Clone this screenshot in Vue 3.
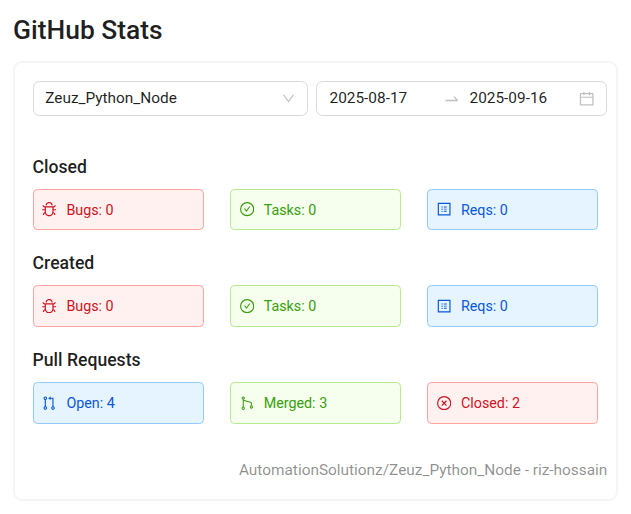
<script setup>
const groups = [
  { title: 'Closed', tags: [
    { icon: 'bug', text: 'Bugs: 0', color: 'red' },
    { icon: 'check', text: 'Tasks: 0', color: 'green' },
    { icon: 'profile', text: 'Reqs: 0', color: 'blue' },
  ] },
  { title: 'Created', tags: [
    { icon: 'bug', text: 'Bugs: 0', color: 'red' },
    { icon: 'check', text: 'Tasks: 0', color: 'green' },
    { icon: 'profile', text: 'Reqs: 0', color: 'blue' },
  ] },
  { title: 'Pull Requests', tags: [
    { icon: 'pull', text: 'Open: 4', color: 'blue' },
    { icon: 'merge', text: 'Merged: 3', color: 'green' },
    { icon: 'close', text: 'Closed: 2', color: 'red' },
  ] },
]
</script>

<template>
  <main class="page">
    <h1>GitHub Stats</h1>
    <section class="card">
      <div class="filters">
        <div class="field select">
          <span>Zeuz_Python_Node</span>
          <svg class="down" viewBox="64 64 896 896"><path d="M884 256h-75c-5.1 0-9.9 2.5-12.9 6.6L512 654.2 227.9 262.6c-3-4.1-7.8-6.6-12.9-6.6h-75c-6.5 0-10.3 7.4-6.5 12.7l352.6 486.1c12.8 17.6 39 17.6 51.7 0l352.6-486.1c3.9-5.3.1-12.7-6.4-12.7z" /></svg>
        </div>
        <div class="field range">
          <span class="date">2025-08-17</span>
          <svg class="arrow" viewBox="0 0 1024 1024"><path d="M873.1 596.2l-164-208A32 32 0 00684 376h-64.8c-6.7 0-10.4 7.7-6.3 13l144.3 183H152c-4.4 0-8 3.6-8 8v60c0 4.4 3.6 8 8 8h695.9c26.8 0 41.7-30.8 25.2-51.8z" /></svg>
          <span class="date">2025-09-16</span>
          <svg class="calendar" viewBox="64 64 896 896"><path d="M880 184H712v-64c0-4.4-3.6-8-8-8h-56c-4.4 0-8 3.6-8 8v64H384v-64c0-4.4-3.6-8-8-8h-56c-4.4 0-8 3.6-8 8v64H144c-17.7 0-32 14.3-32 32v664c0 17.7 14.3 32 32 32h736c17.7 0 32-14.3 32-32V216c0-17.7-14.3-32-32-32zm-40 656H184V460h656v380zM184 392V256h128v48c0 4.4 3.6 8 8 8h56c4.4 0 8-3.6 8-8v-48h256v48c0 4.4 3.6 8 8 8h56c4.4 0 8-3.6 8-8v-48h128v136H184z" /></svg>
        </div>
      </div>

      <section v-for="group in groups" :key="group.title" class="group">
        <h2>{{ group.title }}</h2>
        <div class="tags">
          <div v-for="tag in group.tags" :key="tag.text" class="tag" :class="tag.color">
            <svg class="icon" viewBox="64 64 896 896">
              <template v-if="tag.icon === 'bug'">
                <path d="M304 280h56c4.4 0 8-3.6 8-8 0-28.3 5.9-53.2 17.1-73.5 10.6-19.4 26-34.8 45.4-45.4C450.9 142 475.7 136 504 136h16c28.3 0 53.2 5.9 73.5 17.1 19.4 10.6 34.8 26 45.4 45.4C650 218.9 656 243.7 656 272c0 4.4 3.6 8 8 8h56c4.4 0 8-3.6 8-8 0-40-8.8-76.7-25.9-108.1a184.31 184.31 0 00-74-74C596.7 72.8 560 64 520 64h-16c-40 0-76.7 8.8-108.1 25.9a184.31 184.31 0 00-74 74C304.8 195.3 296 232 296 272c0 4.4 3.6 8 8 8z" />
                <path d="M940 512H792V412c76.8 0 139-62.2 139-139 0-4.4-3.6-8-8-8h-60c-4.4 0-8 3.6-8 8a63 63 0 01-63 63H232a63 63 0 01-63-63c0-4.4-3.6-8-8-8h-60c-4.4 0-8 3.6-8 8 0 76.8 62.2 139 139 139v100H84c-4.4 0-8 3.6-8 8v56c0 4.4 3.6 8 8 8h148v96c0 6.5.2 13 .7 19.3C164.1 728.6 116 796.7 116 876c0 4.4 3.6 8 8 8h56c4.4 0 8-3.6 8-8 0-44.2 23.9-82.9 59.6-103.7a273 273 0 0022.7 49c24.3 41.5 59 76.2 100.5 100.5S460.5 960 512 960s99.8-13.9 141.3-38.2a281.38 281.38 0 00123.2-149.5A120 120 0 01836 876c0 4.4 3.6 8 8 8h56c4.4 0 8-3.6 8-8 0-79.3-48.1-147.4-116.7-176.7.4-6.4.7-12.8.7-19.3v-96h148c4.4 0 8-3.6 8-8v-56c0-4.4-3.6-8-8-8zM716 680c0 36.8-9.7 72-27.8 102.9-17.7 30.3-43 55.6-73.3 73.3C584 874.3 548.8 884 512 884s-72-9.7-102.9-27.8c-30.3-17.7-55.6-43-73.3-73.3A202.75 202.75 0 01308 680V412h408v268z" />
              </template>
              <template v-else-if="tag.icon === 'check'">
                <path d="M699 353h-46.9c-10.2 0-19.9 4.9-25.9 13.3L469 584.3l-71.2-98.8c-6-8.3-15.6-13.3-25.9-13.3H325c-6.5 0-10.3 7.4-6.5 12.7l124.6 172.8a31.8 31.8 0 0051.7 0l210.6-292c3.9-5.3.1-12.7-6.4-12.7z" />
                <circle class="line" cx="512" cy="512" r="410" />
              </template>
              <template v-else-if="tag.icon === 'profile'">
                <path class="line" d="M148 148h728v728H148z" />
                <path d="M492 348h184v56H492zM492 484h184v56H492zM492 620h184v56H492z" />
                <circle cx="380" cy="376" r="40" /><circle cx="380" cy="512" r="40" /><circle cx="380" cy="648" r="40" />
              </template>
              <path v-else-if="tag.icon === 'pull'" d="M788 705.9V192c0-8.8-7.2-16-16-16H602v-68.8c0-6-7-9.4-11.7-5.7L462.7 202.3a7.14 7.14 0 000 11.3l127.6 100.8c4.7 3.7 11.7.4 11.7-5.7V240h114v465.9c-44.2 15-76 56.9-76 106.1 0 61.8 50.2 112 112 112s112-50.2 112-112c.1-49.2-31.7-91-75.9-106.1zM752 860a48.01 48.01 0 010-96 48.01 48.01 0 010 96zM384 212c0-61.8-50.2-112-112-112s-112 50.2-112 112c0 49.2 31.8 91 76 106.1V706c-44.2 15-76 56.9-76 106.1 0 61.8 50.2 112 112 112s112-50.2 112-112c0-49.2-31.8-91-76-106.1V318.1c44.2-15.1 76-56.9 76-106.1zm-160 0a48.01 48.01 0 0196 0 48.01 48.01 0 01-96 0zm96 600a48.01 48.01 0 01-96 0 48.01 48.01 0 0196 0z" />
              <template v-else-if="tag.icon === 'merge'">
                <g class="line branch">
                  <circle cx="268" cy="192" r="72" /><circle cx="268" cy="832" r="72" /><circle cx="776" cy="752" r="72" />
                  <path d="M268 264v496M268 330l456 122q52 16 52 66v162" />
                </g>
              </template>
              <template v-else>
                <circle class="line" cx="512" cy="512" r="410" />
                <path class="line" d="M366 360l292 304M658 360L366 664" />
              </template>
            </svg>
            <span>{{ tag.text }}</span>
          </div>
        </div>
      </section>
      <footer>AutomationSolutionz/Zeuz_Python_Node - riz-hossain</footer>
    </section>
  </main>
</template>

<style>
body { margin: 0; background: #fff; }
</style>

<style scoped>
.page { box-sizing: border-box; width: 631px; height: 514px; padding: 14px 13px 0; font-family: Roboto, sans-serif; font-size: 15.4px; color: rgba(0, 0, 0, .88); }
h1 { margin: 0 0 15px; font-size: 26.4px; line-height: 32px; font-weight: 500; }
.card { box-sizing: border-box; width: 605px; height: 440px; border: 2px solid #f5f5f5; border-radius: 9px; padding: 18px 8.7px 0 17.6px; }
.filters { display: flex; gap: 8px; margin-bottom: 39.8px; }
.field { box-sizing: border-box; height: 35px; border: 1px solid #d9d9d9; border-radius: 6.6px; display: flex; align-items: center; line-height: 33px; }
.field svg { fill: rgba(0, 0, 0, .25); flex: none; }
.select { width: 275.4px; padding: 0 12px 0 11.6px; justify-content: space-between; }
.range { width: 291px; padding: 0 12px 0 12.5px; }
.date { width: 114.1px; }
.arrow { width: 17.6px; height: 17.6px; margin-right: 8.6px; }
.arrow + .date { width: 109.4px; }
.down { width: 13px; height: 13px; }
.calendar { width: 15.4px; height: 15.4px; }
.group { height: 96.6px; }
h2 { margin: 0 0 10.9px; font-size: 17.6px; line-height: 22px; font-weight: 500; }
.tags { display: grid; grid-template-columns: repeat(3, 171px); gap: 26.3px; }
.tag { box-sizing: border-box; height: 41.7px; padding-left: 8.8px; display: flex; align-items: center; gap: 9.7px; border: 1px solid; border-radius: 4.4px; font-size: 14.3px; }
.icon { width: 14.3px; height: 14.3px; fill: currentColor; }
.line { fill: none; stroke: currentColor; stroke-width: 74; }
.branch { stroke-width: 64; }
.red { color: #cf1322; background: #fff1f0; border-color: #ffa39e; }
.green { color: #389e0d; background: #f6ffed; border-color: #b7eb8f; }
.blue { color: #0958d9; background: #e6f4ff; border-color: #91caff; }
footer { margin-top: 12px; text-align: right; line-height: 24px; color: rgba(0, 0, 0, .45); }
</style>
